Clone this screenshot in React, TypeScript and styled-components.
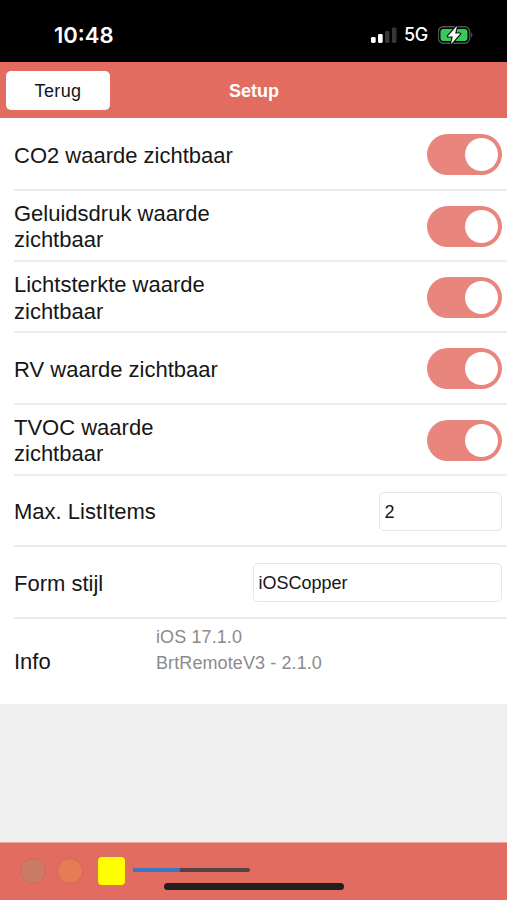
import React from "react";
import styled, { createGlobalStyle } from "styled-components";

const coral = "#e36c60";

const GlobalStyle = createGlobalStyle`
  * { box-sizing: border-box; }
  body { margin: 0; background: #efefef; font-family: "Liberation Sans", Arial, sans-serif; color: #161616; }
`;

const Screen = styled.div`
  display: flex;
  flex-direction: column;
  width: 507px;
  height: 900px;
  overflow: hidden;
  background: #efefef;
`;

const StatusBar = styled.div`
  flex: none;
  display: flex;
  align-items: center;
  justify-content: space-between;
  height: 62px;
  padding: 8px 33px 0 54px;
  background: #000;
  color: #fff;
  font-family: Inter, sans-serif;
`;

const Time = styled.span`
  font-size: 22px;
  font-weight: 600;
  line-height: 26px;
`;

const StatusIcons = styled.div`
  display: flex;
  align-items: center;
`;

const Network = styled.span`
  width: 33px;
  margin-left: 6px;
  margin-right: 1px;
  font-size: 18px;
  font-weight: 500;
  line-height: 22px;
  letter-spacing: -0.3px;
`;

const Header = styled.header`
  flex: none;
  display: grid;
  grid-template-columns: 104px 1fr 104px;
  align-items: center;
  height: 56px;
  padding: 0 5px 0 6px;
  background: ${coral};
`;

const BackButton = styled.button`
  height: 39px;
  padding: 2px 0 0;
  border: 0;
  border-radius: 5px;
  background: #fff;
  color: #161616;
  font: 18px "Liberation Sans", Arial, sans-serif;
  letter-spacing: 0.4px;
`;

const Title = styled.h1`
  margin: 2px 0 0;
  text-align: center;
  color: #fff;
  font-size: 18px;
  line-height: 22px;
  font-weight: 700;
`;

const List = styled.main`
  flex: none;
  height: 586px;
  padding: 1.3px 0 0 14px;
  background: #fff;
`;

const Row = styled.div`
  display: flex;
  align-items: center;
  justify-content: space-between;
  height: 71.33px;
  padding: 2px 5px 0 0;
  border-bottom: 2px solid #ececec;
`;

const Label = styled.span<{ $width?: number }>`
  width: ${(p) => (p.$width ? p.$width + "px" : "auto")};
  font-size: 22px;
  line-height: 26.4px;
  padding-top: 2px;
`;

const Toggle = styled.button`
  flex: none;
  display: flex;
  align-items: center;
  justify-content: flex-end;
  width: 75.5px;
  height: 41px;
  padding: 0 4px;
  border: 0;
  border-radius: 21px;
  background: #e8867e;
`;

const Knob = styled.span`
  width: 33px;
  height: 33px;
  border-radius: 50%;
  background: #fff;
`;

const Field = styled.input<{ $width: number }>`
  width: ${(p) => p.$width}px;
  height: 39px;
  padding: 2px 5px 0;
  border: 1.5px solid #e6e6e6;
  border-radius: 5px;
  background: #fff;
  color: #161616;
  font: 18px "Liberation Sans", Arial, sans-serif;
  outline: none;
`;

const InfoRow = styled.div`
  display: grid;
  grid-template-columns: 142px 1fr;
  align-items: center;
  height: 85px;
`;

const InfoText = styled.div`
  align-self: start;
  padding-top: 5px;
  color: #8b8b8b;
  font-size: 18px;
  line-height: 26px;
  letter-spacing: 0.1px;
`;

const Footer = styled.footer`
  position: relative;
  flex: none;
  display: flex;
  height: 58px;
  margin-top: auto;
  padding: 14px 0 0 20px;
  border-top: 1px solid #eda59e;
  background: ${coral};
`;

const Dot = styled.span<{ $color: string }>`
  width: 26px;
  height: 26px;
  margin: 1px 11px 0 0;
  border: 1px solid #d3685b;
  border-radius: 50%;
  background: ${(p) => p.$color};
`;

const Swatch = styled.span`
  width: 27px;
  height: 28px;
  margin-left: 4px;
  border-radius: 4px;
  background: #ff0;
`;

const Track = styled.span`
  width: 117px;
  height: 4px;
  margin: 11px 0 0 8px;
  border-radius: 2px;
  overflow: hidden;
  background: #564341;
`;

const Progress = styled.span`
  display: block;
  width: 40%;
  height: 100%;
  background: #3b77c9;
`;

const HomeIndicator = styled.span`
  position: absolute;
  left: 164px;
  bottom: 10px;
  width: 180px;
  height: 7px;
  border-radius: 4px;
  background: #20201e;
`;

const Signal = () => (
  <svg width="27" height="17" viewBox="0 0 27 17">
    <rect x="0" y="10" width="4.7" height="6" rx="1.4" fill="#fff" />
    <rect x="7" y="7" width="4.7" height="9" rx="1.4" fill="#fff" />
    <rect x="14" y="4" width="4.5" height="12" rx="1.4" fill="#373737" />
    <rect x="21" y="0.5" width="4.5" height="15.5" rx="1.4" fill="#373737" />
  </svg>
);

const Battery = () => (
  <svg width="36" height="20" viewBox="0 0 36 20">
    <rect x="0.3" y="1.8" width="31.4" height="16.4" rx="5" fill="none" stroke="#545454" strokeWidth="1.4" />
    <rect x="2.5" y="4" width="27" height="12" rx="3" fill="#35cb58" />
    <path d="M33.2 7.3 Q35.7 10 33.2 12.7 Z" fill="#545454" />
    <path d="M18.6 1.5 L10 11.3 H15.1 L13.4 18.5 L22 8.7 H16.9 Z" fill="#fff" stroke="#000" strokeWidth="2.6" strokeLinejoin="round" />
    <path d="M18.6 1.5 L10 11.3 H15.1 L13.4 18.5 L22 8.7 H16.9 Z" fill="#fff" stroke="#fff" strokeWidth="0.5" strokeLinejoin="round" />
  </svg>
);

const toggles = [
  { label: "CO2 waarde zichtbaar", width: 235 },
  { label: "Geluidsdruk waarde zichtbaar", width: 235 },
  { label: "Lichtsterkte waarde zichtbaar", width: 235 },
  { label: "RV waarde zichtbaar", width: 235 },
  { label: "TVOC waarde zichtbaar", width: 220 },
];

export default function App() {
  return (
    <Screen>
      <GlobalStyle />
      <StatusBar>
        <Time>10:48</Time>
        <StatusIcons>
          <Signal />
          <Network>5G</Network>
          <Battery />
        </StatusIcons>
      </StatusBar>
      <Header>
        <BackButton>Terug</BackButton>
        <Title>Setup</Title>
      </Header>
      <List>
        {toggles.map(({ label, width }) => (
          <Row key={label}>
            <Label $width={width}>{label}</Label>
            <Toggle role="switch" aria-checked="true" aria-label={label}>
              <Knob />
            </Toggle>
          </Row>
        ))}
        <Row>
          <Label>Max. ListItems</Label>
          <Field $width={123.5} defaultValue="2" aria-label="Max. ListItems" />
        </Row>
        <Row>
          <Label>Form stijl</Label>
          <Field $width={249.5} defaultValue="iOSCopper" aria-label="Form stijl" />
        </Row>
        <InfoRow>
          <Label>Info</Label>
          <InfoText>
            <div>iOS 17.1.0</div>
            <div>BrtRemoteV3 - 2.1.0</div>
          </InfoText>
        </InfoRow>
      </List>
      <Footer>
        <Dot $color="#c97b66" />
        <Dot $color="#e67b56" />
        <Swatch />
        <Track>
          <Progress />
        </Track>
        <HomeIndicator />
      </Footer>
    </Screen>
  );
}
